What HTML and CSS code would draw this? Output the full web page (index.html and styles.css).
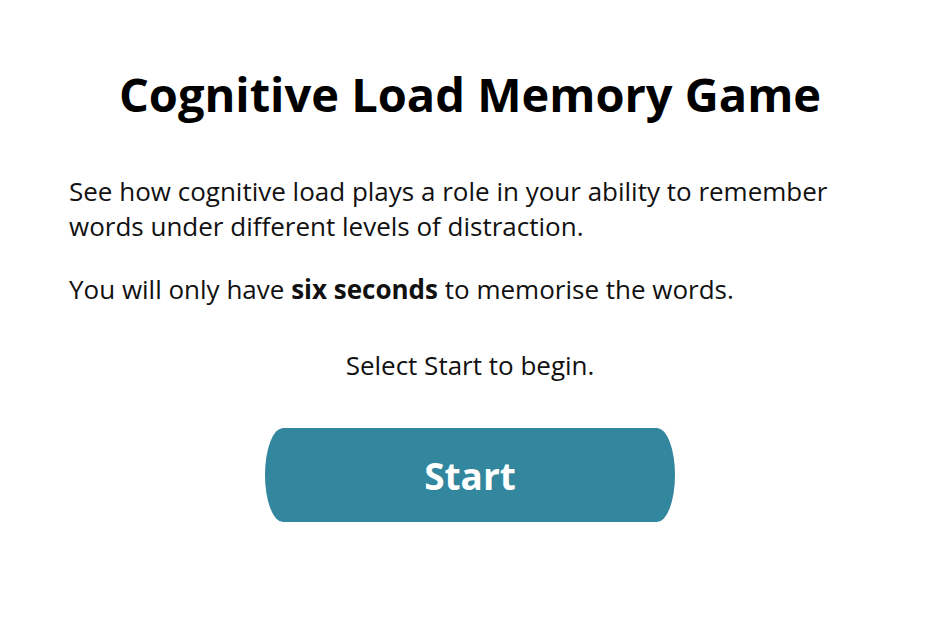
FILE: index.html
```html
<!DOCTYPE html>
<html>
<head>
<meta charset="utf-8">
<link rel="stylesheet" href="styles.css">
</head>
<body>
<main class="game">
  <h1 class="title">Cognitive Load Memory Game</h1>
  <p class="text">See how cognitive load plays a role in your ability to remember words under different levels of distraction.</p>
  <p class="text">You will only have <strong>six seconds</strong> to memorise the words.</p>
  <p class="text center">Select Start to begin.</p>
  <div class="actions">
    <button class="start">Start</button>
  </div>
</main>
</body>
</html>
```

FILE: styles.css
```css
html, body {
  margin: 0;
  padding: 0;
  background: #ffffff;
}
body {
  font-family: "Open Sans", "Noto Sans", sans-serif;
  color: #111111;
}
.game {
  width: 802px;
  margin: 0 auto;
  padding-top: 64px;
}
.title {
  font-size: 47px;
  font-weight: 700;
  text-align: center;
  margin: 0 0 50px;
  line-height: 60px;
  color: #000;
}
.text {
  font-size: 26px;
  line-height: 35px;
  margin: 0 0 28px;
}
.text strong {
  font-weight: 700;
}
.center {
  text-align: center;
  margin-top: 41px;
}
.actions {
  display: flex;
  justify-content: center;
  margin-top: 45px;
}
.start {
  width: 410px;
  height: 94px;
  border: none;
  border-radius: 18px / 47px;
  background: #32869e;
  color: #ffffff;
  font-family: "Open Sans", "Noto Sans", sans-serif;
  font-weight: 700;
  font-size: 37px;
  cursor: pointer;
}
```
